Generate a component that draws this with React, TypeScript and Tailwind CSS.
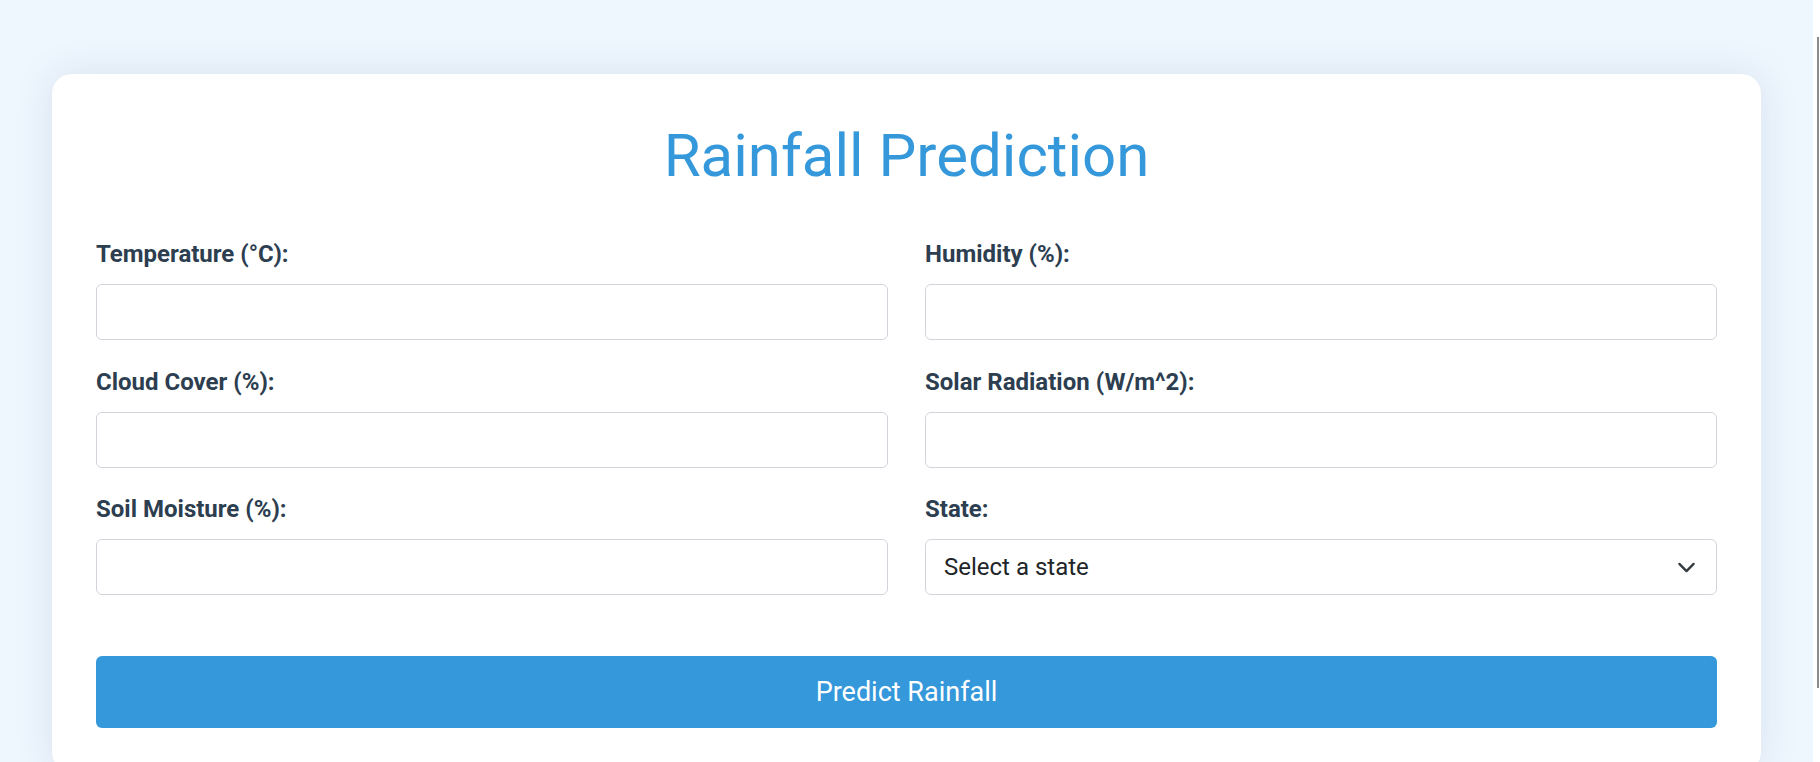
import React from "react";

function Field({ label, children }: { label: string; children?: React.ReactNode }) {
  return (
    <div className="flex flex-col">
      <label className="block text-[24px] leading-[36px] font-bold text-[#2c3e50] mb-[12px]">{label}</label>
      {children ?? (
        <input
          type="text"
          className="h-[56px] w-full rounded-[6px] border border-[#d1d5db] bg-white px-[18px] text-[24px] outline-none"
        />
      )}
    </div>
  );
}

export default function App() {
  return (
    <div className="flex h-[762px] w-full overflow-hidden" style={{ fontFamily: "Roboto, 'Noto Sans', sans-serif" }}>
      <main className="flex-1 bg-[#eef6fe] px-[52px] pt-[74px]">
        <div className="rounded-[20px] bg-white px-[44px] pt-[46px] pb-[44px] shadow-[0_0_40px_rgba(40,70,110,0.10)]">
          <h1 className="text-center text-[60px] leading-[72px] font-normal text-[#3498db] mb-[44px]">Rainfall Prediction</h1>
          <div className="grid grid-cols-2 gap-x-[37px] gap-y-[23.5px]">
            <Field label="Temperature (°C):" />
            <Field label="Humidity (%):" />
            <Field label="Cloud Cover (%):" />
            <Field label="Solar Radiation (W/m^2):" />
            <Field label="Soil Moisture (%):" />
            <Field label="State:">
              <div className="flex h-[56px] w-full items-center justify-between rounded-[6px] border border-[#d1d5db] bg-white pl-[18px] pr-[20px]">
                <span className="text-[24px] text-[#212529]">Select a state</span>
                <svg width="19" height="19" viewBox="0 0 16 16" fill="none">
                  <path d="m2 5 6 6 6-6" stroke="#343a40" strokeWidth="2" strokeLinecap="round" strokeLinejoin="round" />
                </svg>
              </div>
            </Field>
          </div>
          <button className="mt-[61px] flex h-[72px] w-full items-center justify-center rounded-[6px] bg-[#3498db] text-[27px] text-white">
            Predict Rainfall
          </button>
        </div>
      </main>
      <div className="flex w-[7px] flex-col bg-white pt-[37px]">
        <div className="ml-[4px] h-[651px] w-[2px] bg-[#8c8c8c]" />
      </div>
    </div>
  );
}
